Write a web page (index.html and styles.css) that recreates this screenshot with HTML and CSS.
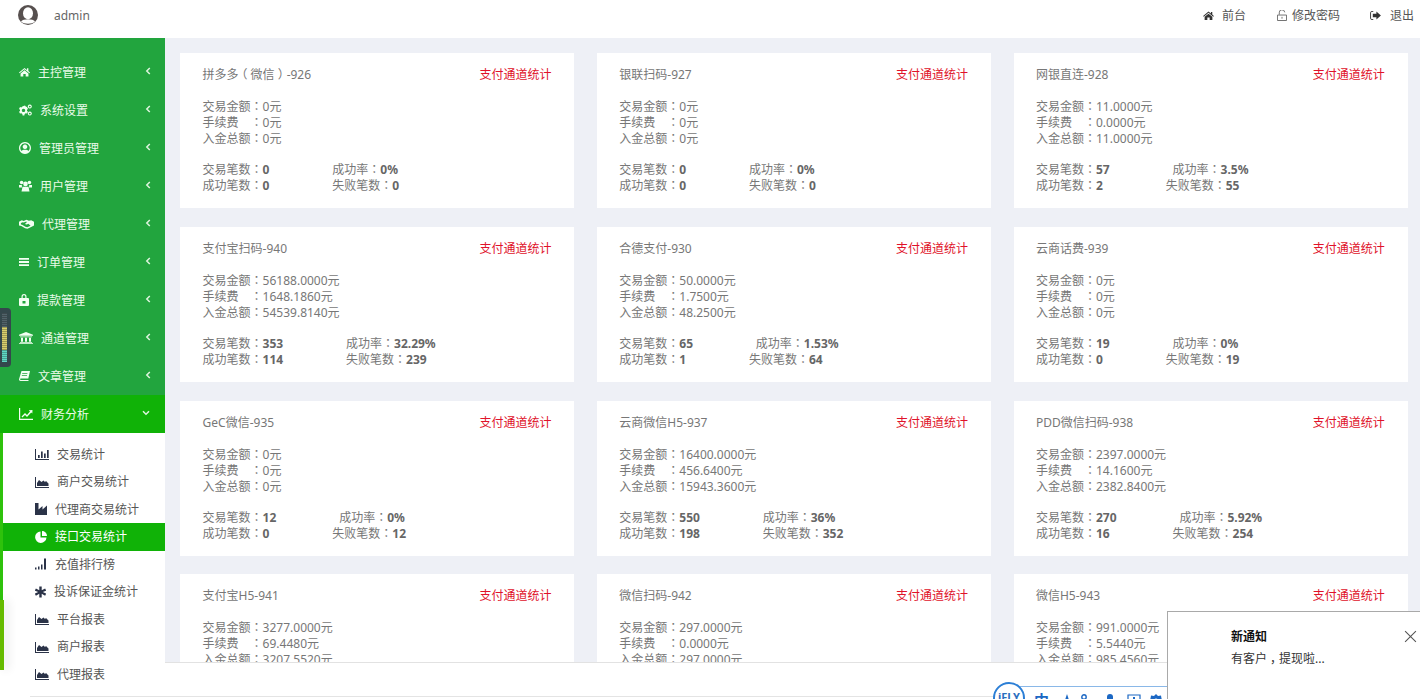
FILE: index.html
```html
<!DOCTYPE html>
<html>
<head>
<meta charset="utf-8">
<title>接口交易统计</title>
<link rel="stylesheet" href="styles.css">
</head>
<body>
<svg class="defs" aria-hidden="true">
  <symbol id="i-home" viewBox="0 0 12 10"><path d="M6 .6 8.700 2.800V1h1.500v3L12 5.500l-.7.8L6 2 .7 6.300 0 5.500z"/><path d="M6 3 10.300 6.500V10H7.300V7.300H4.700V10H1.700V6.500z"/></symbol>
  <symbol id="i-cogs" viewBox="0 0 13 11"><path fill-rule="evenodd" d="M4.500 1.500 6 1l.7 1 1.300.6L9 4.500 8 5.200v1.200l1 .9-1 1.800-1.300-.3-1 .8L5.300 11H3.600l-.3-1.400-1-.8-1.300.3L0 7.300l1-.9V5.200L0 4.500 1 2.600l1.300.3 1-.8zM4.500 4.200a1.700 1.700 0 1 0 .01 0z"/><path fill-rule="evenodd" d="M10.800 0a2 2 0 1 1-.01 0zM10.800 1.200a.8.800 0 1 0 .01 0zM10.800 7a2 2 0 1 1-.01 0zM10.800 8.200a.8.800 0 1 0 .01 0z"/></symbol>
  <symbol id="i-user" viewBox="0 0 12 12"><path fill-rule="evenodd" d="M6 0a6 6 0 1 1-.01 0zM6 1.300a4.700 4.700 0 0 0-3.500 7.800C3 8 4.300 7.700 6 7.700s3 .3 3.500 1.400A4.700 4.700 0 0 0 6 1.300zM6 2.500a2.300 2.300 0 1 1-.01 0z"/></symbol>
  <symbol id="i-users" viewBox="0 0 13 11"><circle cx="2.600" cy="2" r="1.800"/><circle cx="10.400" cy="2" r="1.800"/><circle cx="6.500" cy="3.400" r="2.300"/><path d="M0 4.500h2.800L3 7H0zM10 7l.2-2.500H13V7zM3.500 6.200h6L10.500 11h-8z"/></symbol>
  <symbol id="i-hands" viewBox="0 0 16 10"><path d="M0 2.500 3 1l2 .8L8 .5l2.500 1L13 1l3 1.500v4L13.500 8 9 10 6.500 9.500 2.500 7 0 6.500zM4 3 2 3.800v1.600l1.300.4L6.800 8l2 .5 3.500-1.600L10 4.800 8.200 5.600 6.300 5l2-2-.5-.7L5 3.500z" fill-rule="evenodd"/></symbol>
  <symbol id="i-bars" viewBox="0 0 10 8"><path d="M0 0h10v1.700H0zM0 3.100h10v1.800H0zM0 6.300h10V8H0z"/></symbol>
  <symbol id="i-lock" viewBox="0 0 10 12"><path fill-rule="evenodd" d="M5 0a2.500 2.500 0 0 1 2.500 2.500V4H9a1 1 0 0 1 1 1v6a1 1 0 0 1-1 1H1a1 1 0 0 1-1-1V5a1 1 0 0 1 1-1h1.500V2.500A2.500 2.500 0 0 1 5 0zM5 1.200A1.300 1.300 0 0 0 3.700 2.500V4h2.600V2.500A1.300 1.300 0 0 0 5 1.200zM3.500 7v2.500h3V7z"/></symbol>
  <symbol id="i-bank" viewBox="0 0 14 12"><path d="M7 0 14 2.800v1H0v-1zM1 4.500h12v.7H1zM2 5.700h2v4H2zM6 5.700h2v4H6zM10 5.700h2v4h-2zM1 10h12v.8H1zM0 11.200h14V12H0z"/></symbol>
  <symbol id="i-book" viewBox="0 0 11 10"><path fill-rule="evenodd" d="M2.500 0H11L9.300 7.500H1.800c-.5 0-.7.300-.7.700s.3.700.7.700h7.700V10H1.500C.5 10 0 9.300 0 8.300zM3.300 2l-.2.800h5.200l.2-.8zM2.900 4l-.2.800h5.200l.2-.8z"/></symbol>
  <symbol id="i-line" viewBox="0 0 14 12"><path d="M0 0h1.200v10.800H14V12H0z"/><path d="M2.500 8.500 6 5l2 2 3-3.500-1.200-1.200L13.500 2l-.2 3.500-1.100-1.100L8 9 6 7 3.400 9.500z"/></symbol>
  <symbol id="i-barc" viewBox="0 0 14 12"><path d="M0 1h1v10h13v1H0zM3 7h1.700v3H3zM6 3.500h1.700V10H6zM9 5.500h1.700V10H9zM12 2h1.700v8H12z"/></symbol>
  <symbol id="i-area" viewBox="0 0 14 12"><path d="M0 1h1v10h13v1H0z"/><path d="M2 10V7l2-3 2.500 2L8.500 4.500 10 6l1-1 2.500 2.500V10z"/></symbol>
  <symbol id="i-fact" viewBox="0 0 12 12"><path d="M0 0h3.500v6.500L7.500 3v3.500l4.500-4V12H0z"/></symbol>
  <symbol id="i-pie" viewBox="0 0 12 12"><path d="M5.500.5v6h6A5.700 5.700 0 1 1 5.500.5z"/><path d="M7 0a5 5 0 0 1 5 5H7z"/></symbol>
  <symbol id="i-sig" viewBox="0 0 12 11"><path d="M0 9h1.500v2H0zM3 8h1.500v3H3zM6 6h1.500v5H6zM9 0h2v11H9z" /></symbol>
  <symbol id="i-star" viewBox="0 0 10 10"><path d="M3.900 0h2.200v3.500L9.200 1.800l1 1.900L7.100 5l3.100 1.500-1 1.900L6.100 6.700V10H3.900V6.700L.8 8.400l-1-1.900L2.900 5-.2 3.700l1-1.900 3.100 1.700z"/></symbol>
  <symbol id="i-open" viewBox="0 0 11 12"><path d="M2.500 5V3a3 3 0 0 1 6-.5M.5 5.500h10V11.500H.5zM5.500 7.500v2" fill="none" stroke="currentColor"/></symbol>
  <symbol id="i-out" viewBox="0 0 12 10"><path d="M3.500.5H2A1.500 1.500 0 0 0 .5 2v6A1.500 1.500 0 0 0 2 9.500h1.500" fill="none" stroke="currentColor"/><path d="M7 .5 12 5 7 9.500V7H3V3h4z"/></symbol>
  <symbol id="i-left" viewBox="0 0 6 8"><path d="M4.800 1 1.800 4l3 3" fill="none" stroke="currentColor" stroke-width="1.500"/></symbol>
  <symbol id="i-down" viewBox="0 0 8 6"><path d="M1 1.300l3 3 3-3" fill="none" stroke="currentColor" stroke-width="1.500"/></symbol>
</svg>

<header class="topbar">
  <div class="user">
    <svg class="avatar" viewBox="0 0 20 20"><circle cx="10" cy="10" r="10" fill="#57504f"/><ellipse cx="10" cy="8.300" rx="5" ry="6" fill="#fff"/><path d="M3 16.500c2-3 12-3 14 0-3 3-11 3-14 0z" fill="#fff"/></svg>
    <span class="uname">admin</span>
  </div>
  <nav class="toplinks">
    <a class="toplink tl-home"><svg class="ti ti-home"><use href="#i-home"/></svg>前台</a>
    <a class="toplink tl-pass"><svg class="ti ti-open"><use href="#i-open"/></svg>修改密码</a>
    <a class="toplink tl-out"><svg class="ti ti-out"><use href="#i-out"/></svg>退出</a>
  </nav>
</header>

<div class="layout">
  <aside class="sidebar">
    <ul class="menu">
      <li class="mi"><svg class="ic w11"><use href="#i-home"/></svg><span>主控管理</span><svg class="arrow"><use href="#i-left"/></svg></li>
      <li class="mi"><svg class="ic w13"><use href="#i-cogs"/></svg><span>系统设置</span><svg class="arrow"><use href="#i-left"/></svg></li>
      <li class="mi"><svg class="ic w12"><use href="#i-user"/></svg><span>管理员管理</span><svg class="arrow"><use href="#i-left"/></svg></li>
      <li class="mi"><svg class="ic w13"><use href="#i-users"/></svg><span>用户管理</span><svg class="arrow"><use href="#i-left"/></svg></li>
      <li class="mi"><svg class="ic w15"><use href="#i-hands"/></svg><span>代理管理</span><svg class="arrow"><use href="#i-left"/></svg></li>
      <li class="mi"><svg class="ic w10"><use href="#i-bars"/></svg><span>订单管理</span><svg class="arrow"><use href="#i-left"/></svg></li>
      <li class="mi"><svg class="ic w10"><use href="#i-lock"/></svg><span>提款管理</span><svg class="arrow"><use href="#i-left"/></svg></li>
      <li class="mi"><svg class="ic w14"><use href="#i-bank"/></svg><span>通道管理</span><svg class="arrow"><use href="#i-left"/></svg></li>
      <li class="mi"><svg class="ic w11"><use href="#i-book"/></svg><span>文章管理</span><svg class="arrow"><use href="#i-left"/></svg></li>
      <li class="mi open"><svg class="ic w14"><use href="#i-line"/></svg><span>财务分析</span><svg class="arrow-d"><use href="#i-down"/></svg></li>
    </ul>
    <ul class="submenu">
      <li class="si"><svg class="sc s14"><use href="#i-barc"/></svg><span>交易统计</span></li>
      <li class="si"><svg class="sc s14"><use href="#i-area"/></svg><span>商户交易统计</span></li>
      <li class="si"><svg class="sc s12"><use href="#i-fact"/></svg><span>代理商交易统计</span></li>
      <li class="si on"><svg class="sc s12"><use href="#i-pie"/></svg><span>接口交易统计</span></li>
      <li class="si"><svg class="sc s12"><use href="#i-sig"/></svg><span>充值排行榜</span></li>
      <li class="si"><svg class="sc s11"><use href="#i-star"/></svg><span>投诉保证金统计</span></li>
      <li class="si"><svg class="sc s14"><use href="#i-area"/></svg><span>平台报表</span></li>
      <li class="si"><svg class="sc s14"><use href="#i-area"/></svg><span>商户报表</span></li>
      <li class="si"><svg class="sc s14"><use href="#i-area"/></svg><span>代理报表</span></li>
    </ul>
  </aside>

  <main class="content">
    <section class="card">
      <div class="head"><span>拼多多<span class="nudge-l">（</span>微信<span class="nudge-r">）</span>-926</span><a class="link">支付通道统计</a></div>
      <p class="amounts">交易金额<em>：</em>0元<br>手续费&emsp;<em>：</em>0元<br>入金总额<em>：</em>0元</p>
      <p class="stats"><span class="st">交易笔数<em>：</em><b>0</b></span><span>成功率<em>：</em><b>0%</b></span><br><span class="st">成功笔数<em>：</em><b>0</b></span><span>失败笔数<em>：</em><b>0</b></span></p>
    </section>
    <section class="card">
      <div class="head"><span>银联扫码-927</span><a class="link">支付通道统计</a></div>
      <p class="amounts">交易金额<em>：</em>0元<br>手续费&emsp;<em>：</em>0元<br>入金总额<em>：</em>0元</p>
      <p class="stats"><span class="st">交易笔数<em>：</em><b>0</b></span><span>成功率<em>：</em><b>0%</b></span><br><span class="st">成功笔数<em>：</em><b>0</b></span><span>失败笔数<em>：</em><b>0</b></span></p>
    </section>
    <section class="card">
      <div class="head"><span>网银直连-928</span><a class="link">支付通道统计</a></div>
      <p class="amounts">交易金额<em>：</em>11.0000元<br>手续费&emsp;<em>：</em>0.0000元<br>入金总额<em>：</em>11.0000元</p>
      <p class="stats"><span class="st">交易笔数<em>：</em><b>57</b></span><span>成功率<em>：</em><b>3.5%</b></span><br><span class="st">成功笔数<em>：</em><b>2</b></span><span>失败笔数<em>：</em><b>55</b></span></p>
    </section>
    <section class="card">
      <div class="head"><span>支付宝扫码-940</span><a class="link">支付通道统计</a></div>
      <p class="amounts">交易金额<em>：</em>56188.0000元<br>手续费&emsp;<em>：</em>1648.1860元<br>入金总额<em>：</em>54539.8140元</p>
      <p class="stats"><span class="st">交易笔数<em>：</em><b>353</b></span><span>成功率<em>：</em><b>32.29%</b></span><br><span class="st">成功笔数<em>：</em><b>114</b></span><span>失败笔数<em>：</em><b>239</b></span></p>
    </section>
    <section class="card">
      <div class="head"><span>合德支付-930</span><a class="link">支付通道统计</a></div>
      <p class="amounts">交易金额<em>：</em>50.0000元<br>手续费&emsp;<em>：</em>1.7500元<br>入金总额<em>：</em>48.2500元</p>
      <p class="stats"><span class="st">交易笔数<em>：</em><b>65</b></span><span>成功率<em>：</em><b>1.53%</b></span><br><span class="st">成功笔数<em>：</em><b>1</b></span><span>失败笔数<em>：</em><b>64</b></span></p>
    </section>
    <section class="card">
      <div class="head"><span>云商话费-939</span><a class="link">支付通道统计</a></div>
      <p class="amounts">交易金额<em>：</em>0元<br>手续费&emsp;<em>：</em>0元<br>入金总额<em>：</em>0元</p>
      <p class="stats"><span class="st">交易笔数<em>：</em><b>19</b></span><span>成功率<em>：</em><b>0%</b></span><br><span class="st">成功笔数<em>：</em><b>0</b></span><span>失败笔数<em>：</em><b>19</b></span></p>
    </section>
    <section class="card">
      <div class="head"><span>GeC微信-935</span><a class="link">支付通道统计</a></div>
      <p class="amounts">交易金额<em>：</em>0元<br>手续费&emsp;<em>：</em>0元<br>入金总额<em>：</em>0元</p>
      <p class="stats"><span class="st">交易笔数<em>：</em><b>12</b></span><span>成功率<em>：</em><b>0%</b></span><br><span class="st">成功笔数<em>：</em><b>0</b></span><span>失败笔数<em>：</em><b>12</b></span></p>
    </section>
    <section class="card">
      <div class="head"><span>云商微信H5-937</span><a class="link">支付通道统计</a></div>
      <p class="amounts">交易金额<em>：</em>16400.0000元<br>手续费&emsp;<em>：</em>456.6400元<br>入金总额<em>：</em>15943.3600元</p>
      <p class="stats"><span class="st">交易笔数<em>：</em><b>550</b></span><span>成功率<em>：</em><b>36%</b></span><br><span class="st">成功笔数<em>：</em><b>198</b></span><span>失败笔数<em>：</em><b>352</b></span></p>
    </section>
    <section class="card">
      <div class="head"><span>PDD微信扫码-938</span><a class="link">支付通道统计</a></div>
      <p class="amounts">交易金额<em>：</em>2397.0000元<br>手续费&emsp;<em>：</em>14.1600元<br>入金总额<em>：</em>2382.8400元</p>
      <p class="stats"><span class="st">交易笔数<em>：</em><b>270</b></span><span>成功率<em>：</em><b>5.92%</b></span><br><span class="st">成功笔数<em>：</em><b>16</b></span><span>失败笔数<em>：</em><b>254</b></span></p>
    </section>
    <section class="card">
      <div class="head"><span>支付宝H5-941</span><a class="link">支付通道统计</a></div>
      <p class="amounts">交易金额<em>：</em>3277.0000元<br>手续费&emsp;<em>：</em>69.4480元<br>入金总额<em>：</em>3207.5520元</p>
    </section>
    <section class="card">
      <div class="head"><span>微信扫码-942</span><a class="link">支付通道统计</a></div>
      <p class="amounts">交易金额<em>：</em>297.0000元<br>手续费&emsp;<em>：</em>0.0000元<br>入金总额<em>：</em>297.0000元</p>
    </section>
    <section class="card">
      <div class="head"><span>微信H5-943</span><a class="link">支付通道统计</a></div>
      <p class="amounts">交易金额<em>：</em>991.0000元<br>手续费&emsp;<em>：</em>5.5440元<br>入金总额<em>：</em>985.4560元</p>
    </section>
  </main>
</div>

<div class="footbar"></div>
<div class="footline"></div>

<div class="meter"><i class="m-dark"></i><i class="m-yellow"></i><i class="m-teal"></i></div>
<div class="edgebar"></div>

<div class="ifly">
  <div class="ifly-badge">iFLY</div>
  <div class="ifly-bar">
    <span class="ifly-zh">中</span>
    <svg class="fi f1" viewBox="0 0 14 14"><path d="M7 0 11 12H3z"/></svg>
    <svg class="fi f2" viewBox="0 0 14 14"><circle cx="5" cy="3" r="2.200" fill="none" stroke="currentColor" stroke-width="1.400"/><circle cx="11" cy="7" r="1.300"/><path d="M1 14c0-6 8-6 8 0z"/></svg>
    <svg class="fi f3" viewBox="0 0 14 14"><rect x="4" y="0" width="6" height="10" rx="3"/><path d="M1 12h12v2H1z"/></svg>
    <svg class="fi f3" viewBox="0 0 14 14"><path d="M1 1h12v12H1z" fill="none" stroke="currentColor" stroke-width="1.200"/><path d="M6 3h2v6H6z"/></svg>
    <svg class="fi f4" viewBox="0 0 14 14"><path d="M7 0l2 2 3-.5.500 3L14 7l-1.500 2.500-.5 3-3-.5-2 2-2-2-3 .5-.5-3L0 7l1.500-2.500.5-3L5 2zM7 4.500a2.500 2.500 0 1 0 .01 0z" fill-rule="evenodd"/></svg>
  </div>
</div>

<aside class="notice">
  <div class="notice-title">新通知</div>
  <div class="notice-text">有客户<span class="nudge-r">，</span>提现啦...</div>
  <svg class="notice-close" viewBox="0 0 12 12"><path d="M1 1l10 10M11 1 1 11" fill="none" stroke="#555" stroke-width="1"/></svg>
</aside>
</body>
</html>
```

FILE: styles.css
```css
* { box-sizing: border-box; }
html, body { margin: 0; padding: 0; height: 100%; overflow: hidden; }
body {
  font-family: "Noto Sans", "Noto Sans CJK SC", sans-serif;
  font-size: 12px;
  color: #777;
  background: #fff;
}
ul { list-style: none; margin: 0; padding: 0; }
p { margin: 0; }
em { font-style: normal; font-family: "Noto Sans CJK TC", sans-serif; line-height: 0; }
.nudge-r { margin: 0 -3px 0 3px; }
.nudge-l { margin: 0 3px 0 -3px; }
.defs { position: absolute; width: 0; height: 0; }
svg { fill: currentColor; display: block; flex: none; }

.topbar {
  height: 38px;
  background: #fff;
  display: flex;
  justify-content: space-between;
  padding: 5px 6px 0 18px;
}
.user { display: flex; align-items: flex-start; }
.avatar { width: 20px; height: 20px; }
.uname { margin-left: 16px; font-size: 12px; line-height: 21px; color: #666; }
.toplinks { display: flex; height: 21px; }
.toplink { display: flex; align-items: center; color: #555; line-height: 21px; }
.tl-pass { margin-left: 31px; }
.tl-out { margin-left: 30px; }
.ti { color: #333; }
.ti-home { width: 11px; height: 9px; margin-right: 8px; }
.ti-open { width: 10px; height: 11px; margin-right: 5px; color: #666; }
.ti-out { width: 11px; height: 9px; margin-right: 9px; }

.layout { display: flex; height: 661px; }

.sidebar { width: 165px; flex: none; background: #fff; }
.menu { background: #22a53e; padding-top: 15px; }
.mi {
  height: 38px;
  padding-left: 19px;
  display: flex;
  align-items: center;
  gap: 8px;
  color: #eafbe9;
  position: relative;
}
.mi span { line-height: 16px; margin-top: 2px; }
.mi.open { background: #10b207; }
.ic { height: 12px; color: #f2fff2; margin-top: 0; }
.w10 { width: 10px; }
.w11 { width: 11px; }
.w12 { width: 12px; }
.w13 { width: 13px; }
.w14 { width: 14px; }
.w15 { width: 15px; }
.arrow { width: 6px; height: 8px; position: absolute; left: 145px; top: 14px; color: #dff5df; }
.arrow-d { width: 8px; height: 6px; position: absolute; left: 142px; top: 15px; color: #dff5df; }

.submenu { border-left: 3px solid #2ec20c; padding-top: 7.5px; height: 228px; }
.si {
  height: 27.5px;
  padding-left: 32px;
  display: flex;
  align-items: center;
  gap: 8px;
  color: #555;
}
.si span { line-height: 16px; margin-top: 1px; }
.si.on { background: #10b207; color: #fff; }
.sc { height: 12px; color: #2b3348; }
.si.on .sc { color: #fff; }
.s11 { width: 11px; }
.s12 { width: 12px; }
.s14 { width: 14px; }

.content {
  flex: 1;
  background: #eef0f6;
  padding: 15.3px 12px 0 15.2px;
  display: grid;
  grid-template-columns: repeat(3, 394px);
  grid-auto-rows: 155px;
  gap: 18.67px 22.7px;
  overflow: hidden;
  line-height: 16px;
}
.card { background: #fff; padding: 14px 22.8px 0 22.4px; }
.head { display: flex; justify-content: space-between; }
.link { color: #e0122a; }
.amounts { margin-top: 16px; }
.stats { margin-top: 15px; }
.st { margin-right: 62.8px; }
b { color: #666; }

.footbar {
  position: absolute;
  left: 165px; right: 0; top: 662px; bottom: 0;
  background: #fff;
  border-top: 1px solid #e2e2e2;
}
.footline { position: absolute; left: 30px; top: 696px; width: 965px; height: 1px; background: #e4e4e4; }

.meter {
  position: absolute;
  left: 0; top: 308px;
  width: 11px; height: 59px;
  background: #34474c;
  border-radius: 0 4px 4px 0;
  padding: 5px 2px;
  display: flex;
  flex-direction: column;
}
.meter i { display: block; width: 5px; background-image: repeating-linear-gradient(rgba(0, 0, 0, .25) 0 1px, transparent 1px 2px); }
.m-dark { height: 14px; background-color: #52636a; }
.m-yellow { height: 23px; background-color: #d8cf6e; }
.m-teal { height: 12px; background-color: #5fd8c4; }
.edgebar {
  position: absolute;
  left: 0; top: 600px;
  width: 4px; height: 70px;
  background: #66bb00;
  box-shadow: 4px 0 10px rgba(0, 0, 0, .12);
}

.ifly { position: absolute; left: 993px; top: 682px; width: 174px; height: 17px; overflow: hidden; }
.ifly-badge {
  position: absolute;
  left: 0; top: 0;
  width: 32px; height: 32px;
  border: 2px solid #2c7fd6;
  border-radius: 50%;
  background: #fff;
  color: #2a6fc0;
  font-size: 11px;
  font-weight: bold;
  text-align: center;
  line-height: 26px;
  z-index: 1;
}
.ifly-bar {
  position: absolute;
  left: 20px; right: 0; top: 4px; height: 20px;
  border-top: 1px solid #8ab8e8;
  background: #fff;
  color: #1c68c4;
  display: flex;
  align-items: flex-start;
  padding: 5px 0 0 21px;
}
.ifly-zh { font-size: 15px; font-weight: bold; line-height: 16px; }
.fi { width: 14px; height: 14px; margin-top: 2px; }
.f1 { margin-left: 11px; }
.f2 { margin-left: 5px; }
.f3 { margin-left: 10px; }
.f4 { margin-left: 8px; }

.notice {
  position: absolute;
  left: 1167px; top: 611px; right: 0; bottom: 0;
  background: #fff;
  border: 1px solid #a9a9a9;
  border-width: 1px 0 0 1px;
  padding: 14px 0 0 63px;
  line-height: 22px;
  color: #333;
}
.notice-title { font-weight: bold; color: #111; }
.notice-close { position: absolute; left: 236px; top: 18px; width: 13px; height: 13px; }
```
